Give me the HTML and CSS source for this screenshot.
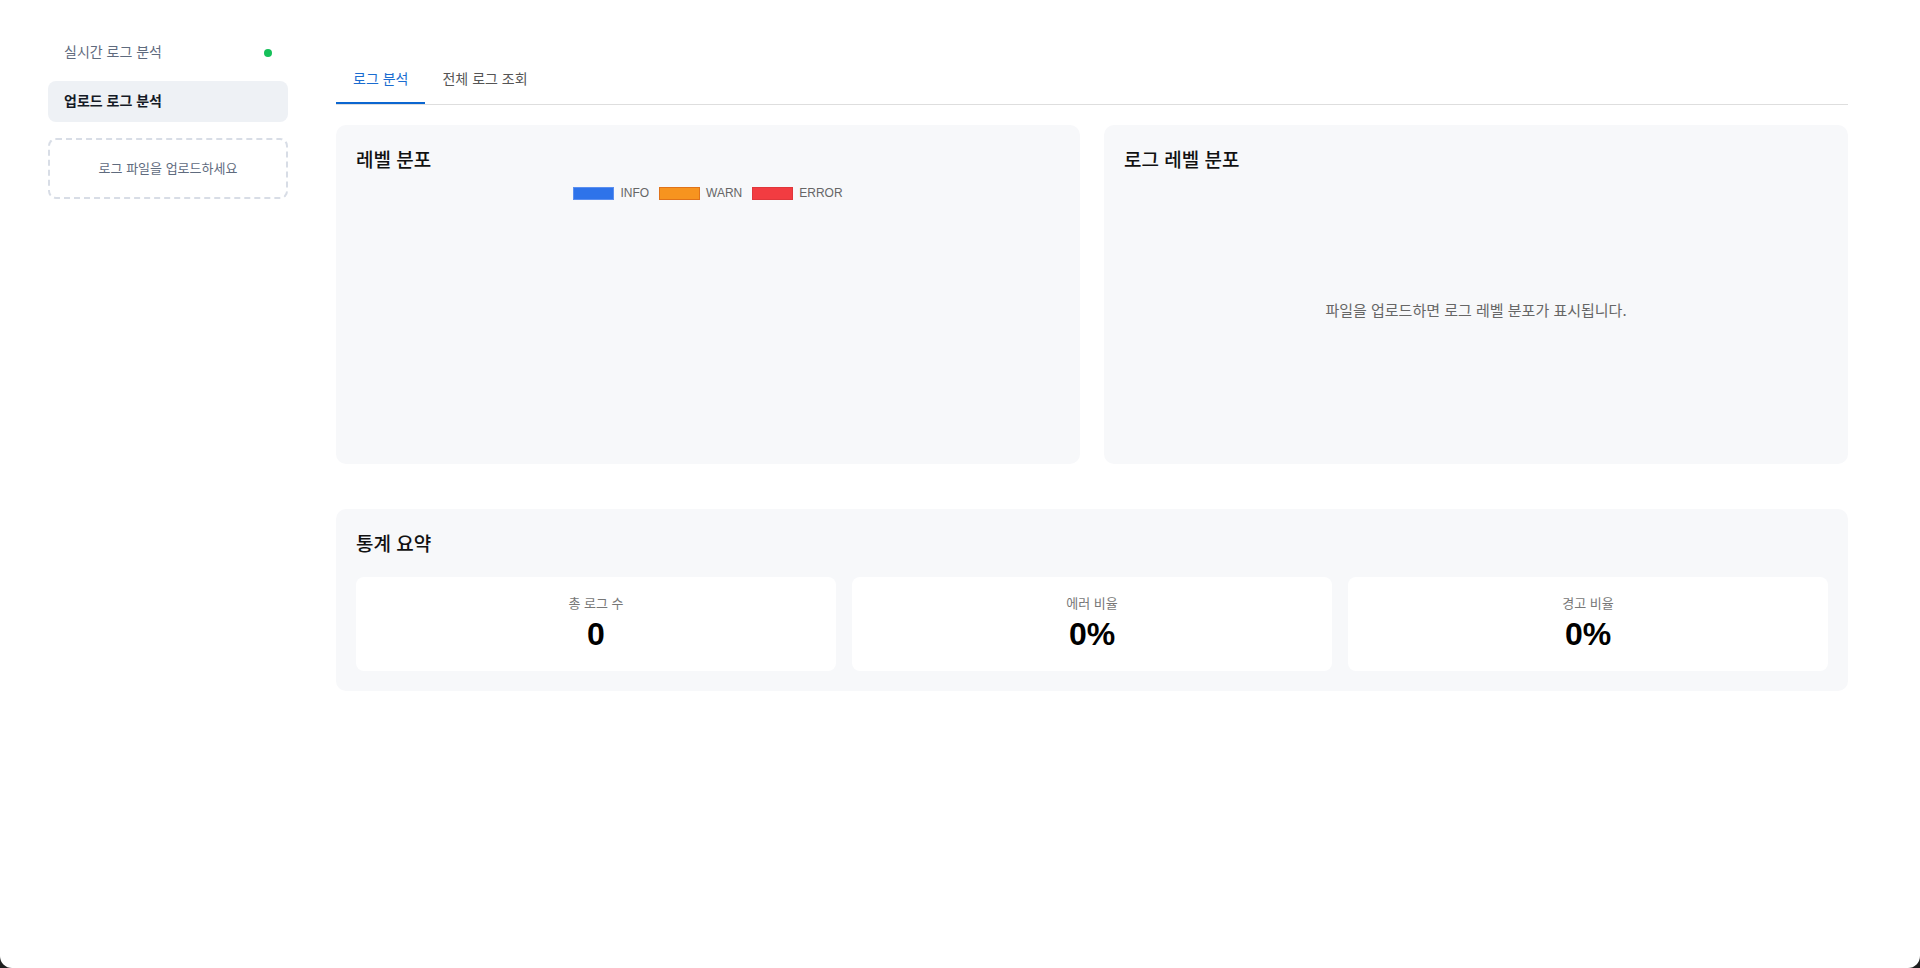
FILE: index.html
```html
<!DOCTYPE html>
<html lang="ko">
<head>
<meta charset="utf-8">
<title>로그 분석</title>
<link rel="stylesheet" href="styles.css">
</head>
<body>
<div class="app">
  <aside class="sidebar">
    <div class="nav-item">
      <span>실시간 로그 분석</span>
      <span class="live-dot"></span>
    </div>
    <div class="nav-item active">
      <span>업로드 로그 분석</span>
    </div>
    <div class="upload-box">로그 파일을 업로드하세요</div>
  </aside>
  <main class="main">
    <nav class="tabs">
      <div class="tab active">로그 분석</div>
      <div class="tab">전체 로그 조회</div>
    </nav>
    <section class="cards">
      <div class="card">
        <h2 class="card-title">레벨 분포</h2>
        <div class="chart-body">
          <div class="legend">
            <span class="legend-item"><span class="swatch swatch-info"></span>INFO</span>
            <span class="legend-item"><span class="swatch swatch-warn"></span>WARN</span>
            <span class="legend-item"><span class="swatch swatch-error"></span>ERROR</span>
          </div>
        </div>
      </div>
      <div class="card">
        <h2 class="card-title">로그 레벨 분포</h2>
        <div class="chart-body placeholder">파일을 업로드하면 로그 레벨 분포가 표시됩니다.</div>
      </div>
    </section>
    <section class="card stats-card">
      <h2 class="card-title">통계 요약</h2>
      <div class="stats-grid">
        <div class="stat">
          <div class="stat-label">총 로그 수</div>
          <div class="stat-value">0</div>
        </div>
        <div class="stat">
          <div class="stat-label">에러 비율</div>
          <div class="stat-value">0%</div>
        </div>
        <div class="stat">
          <div class="stat-label">경고 비율</div>
          <div class="stat-value">0%</div>
        </div>
      </div>
    </section>
  </main>
</div>
</body>
</html>
```
FILE: styles.css
```css
* { box-sizing: border-box; }
html, body { margin: 0; padding: 0; }
body {
  background: #1f1f1f;
  font-family: "Noto Sans CJK KR", "Liberation Sans", sans-serif;
  color: #111;
}
.app {
  display: flex;
  width: 1920px;
  height: 968px;
  background: #ffffff;
  border-radius: 0 0 12px 12px;
  overflow: hidden;
}
.sidebar {
  width: 336px;
  flex: none;
  padding: 32px 48px;
  display: flex;
  flex-direction: column;
  gap: 8px;
}
.nav-item {
  display: flex;
  align-items: center;
  justify-content: space-between;
  height: 41px;
  padding: 0 16px 4px;
  border-radius: 8px;
  font-size: 14px;
  line-height: 20px;
  color: #5f6b7e;
}
.nav-item.active {
  background: #eef1f5;
  color: #141a26;
  font-weight: 700;
}
.live-dot {
  width: 8px;
  height: 8px;
  border-radius: 50%;
  background: #16c05a;
  margin-top: 4px;
}
.upload-box {
  margin-top: 8px;
  height: 61px;
  border: 2px dashed #d8dde6;
  border-radius: 8px;
  display: flex;
  align-items: center;
  justify-content: center;
  font-size: 13px;
  line-height: 20px;
  color: #5f6b7e;
  padding-bottom: 2px;
}
.main {
  flex: 1;
  padding: 58px 72px 0 0;
  display: flex;
  flex-direction: column;
}
.tabs {
  display: flex;
  border-bottom: 1px solid #dedede;
}
.tab {
  padding: 10px 17px 14px;
  line-height: 20px;
  font-size: 14px;
  color: #555;
  border-bottom: 2px solid transparent;
}
.tab.active {
  color: #1a6cd0;
  border-bottom-color: #0b66d0;
}
.cards {
  margin-top: 20px;
  display: grid;
  grid-template-columns: 1fr 1fr;
  gap: 24px;
}
.card {
  background: #f7f8fa;
  border-radius: 10px;
  padding: 20px;
}
.card-title {
  margin: 0;
  font-size: 19px;
  line-height: 28px;
  font-weight: 500;
  color: #111;
}
.chart-body {
  display: flow-root;
  height: 271px;
}
.legend {
  margin-top: 13px;
  display: flex;
  justify-content: center;
  gap: 10px;
  font-family: "Liberation Sans", sans-serif;
  font-size: 12px;
  color: #666;
}
.legend-item {
  display: flex;
  align-items: center;
  gap: 6px;
  height: 14px;
}
.swatch {
  width: 41px;
  height: 13px;
  border: 1px solid;
}
.swatch-info { background: #2e73ea; border-color: #5b8ff0; }
.swatch-warn { background: #f7941f; border-color: #e0731a; }
.swatch-error { background: #f23c41; border-color: #e0363b; }
.placeholder {
  display: flex;
  align-items: center;
  justify-content: center;
  font-size: 15px;
  line-height: 22px;
  color: #666;
  padding-top: 2px;
}
.stats-card {
  margin-top: 45px;
}
.stats-grid {
  margin-top: 20px;
  display: grid;
  grid-template-columns: repeat(3, 1fr);
  gap: 16px;
}
.stat {
  background: #ffffff;
  border-radius: 8px;
  padding: 16px 16px 18px;
  text-align: center;
}
.stat-label {
  font-size: 13px;
  line-height: 20px;
  color: #777;
  margin-bottom: 2px;
}
.stat-value {
  font-family: "Liberation Sans", sans-serif;
  font-size: 32px;
  line-height: 38px;
  font-weight: 700;
  color: #000;
}
```
